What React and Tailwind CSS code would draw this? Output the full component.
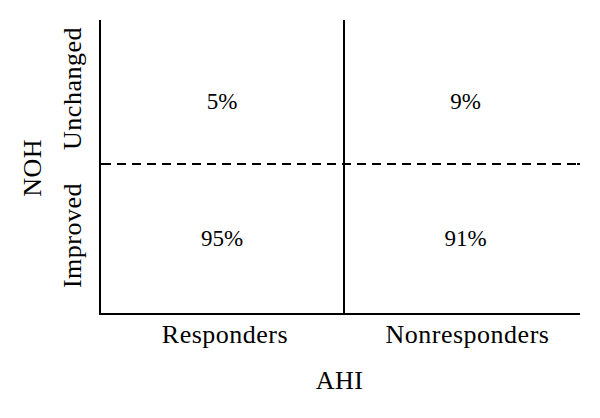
import React from "react";

const cells = {
  top: ["5%", "9%"],
  bottom: ["95%", "91%"],
};

function VLabel({ children, className = "" }) {
  return (
    <div className={"[writing-mode:vertical-rl] rotate-180 leading-none text-[26px] tracking-[0.5px] " + className}>
      {children}
    </div>
  );
}

export default function App() {
  return (
    <div className="w-[600px] h-[418px] bg-white text-black font-['Liberation_Serif',serif] pt-[20px] flex">
      {/* y axis labels */}
      <div className="w-[99px] h-[295px] flex pl-[20px]">
        <div className="w-[26px] h-full flex items-center justify-center">
          <VLabel>NOH</VLabel>
        </div>
        <div className="w-[26px] ml-[14px] h-full flex flex-col">
          <div className="h-[143px] flex items-center justify-center pb-[6px]">
            <VLabel>Unchanged</VLabel>
          </div>
          <div className="h-[2px]" />
          <div className="h-[150px] flex items-center justify-center pb-[8px]">
            <VLabel>Improved</VLabel>
          </div>
        </div>
      </div>

      <div className="w-[481px] flex flex-col">
        {/* quadrant chart */}
        <div className="h-[295px] border-l-2 border-b-2 border-black grid grid-cols-[242px_2px_235px] grid-rows-[143px_2px_148px] text-[23px]">
          <div className="flex items-center justify-center pt-[21px]">{cells.top[0]}</div>
          <div className="row-span-3 col-start-2 row-start-1 bg-black" />
          <div className="flex items-center justify-center pt-[21px] pl-[6px]">{cells.top[1]}</div>
          <div className="bg-[repeating-linear-gradient(90deg,#000_0_9px,transparent_9px_15px)] bg-[position:1px_0]" />
          <div className="bg-[repeating-linear-gradient(90deg,#000_0_9px,transparent_9px_15px)] bg-[position:-3px_0]" />
          <div className="flex items-center justify-center">{cells.bottom[0]}</div>
          <div className="flex items-center justify-center pl-[6px]">{cells.bottom[1]}</div>
        </div>

        {/* x axis labels */}
        <div className="grid grid-cols-[244px_237px] mt-[7px] text-[26px] leading-none tracking-[0.5px]">
          <div className="text-center pl-[8px]">Responders</div>
          <div className="text-center pl-[12px]">Nonresponders</div>
        </div>
        <div className="mt-[20px] text-center text-[26px] leading-none tracking-[0.5px]">AHI</div>
      </div>
    </div>
  );
}
